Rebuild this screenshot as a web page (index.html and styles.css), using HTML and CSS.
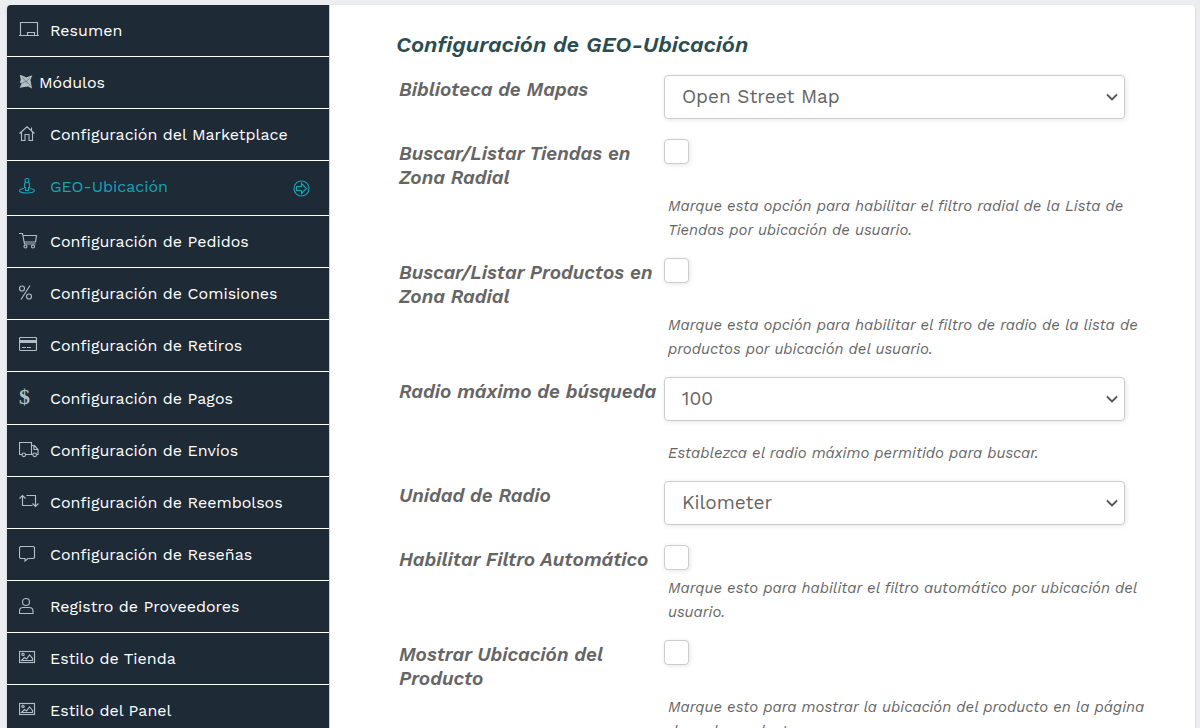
FILE: index.html
```
<!DOCTYPE html>
<html lang="es">
<head>
<meta charset="utf-8">
<title>Configuración de GEO-Ubicación</title>
<link rel="stylesheet" href="styles.css">
</head>
<body>
<div class="panel">
  <nav class="tabs">
    <a class="tab" href="#"><svg class="icon" viewBox="0 0 20 16"><path d="M1.500 13V.5h17V13M0 13.500h20M8.500 13v-2.500h7V13"/></svg><span>Resumen</span></a>
    <a class="tab tab-compact" href="#"><svg class="icon icon-small" viewBox="0 0 14 16"><path class="solid" d="M.8.8l4.700 1.700L7 3.500 13.300 1.200 11.500 6l1.500 8.500-4-2-8.500 1.300 2-3.800L.8 8l1-2z"/><path class="cut" d="M2 9.500l5-2 4-3.500M7 7.500l4.500 4M3.500 3.500L7 7.500"/></svg><span>Módulos</span></a>
    <a class="tab" href="#"><svg class="icon" viewBox="0 0 20 16"><path d="M.5 7.500L8 .8l7.500 6.700M2.500 6v8.500h3.500v-6h4v6h3.500V6M12.500 1.500v3"/></svg><span>Configuración del Marketplace</span></a>
    <a class="tab tab-active" href="#"><svg class="icon" viewBox="0 0 20 16"><circle cx="8" cy="2.500" r="2"/><path d="M6.500 4.500l-1 1v4h1v3h3v-3h1v-4l-1-1M5 10.500c-3 .4-4.500 1.100-4.500 2.100C.5 14 4 15 8 15s7.500-1 7.500-2.400c0-1-1.500-1.700-4.500-2.100"/></svg><span>GEO-Ubicación</span><svg class="arrow" viewBox="0 0 17 17"><circle cx="8.500" cy="8.500" r="7.500"/><path d="M3.500 6.500h5v-3l5 5-5 5v-3h-5z"/></svg></a>
    <a class="tab" href="#"><svg class="icon" viewBox="0 0 20 16"><path d="M0 .5h3.500L5.500 11h11M4 2.500h13.500l-1 6.500H5.300"/><circle cx="6.500" cy="13.500" r="1.500"/><circle cx="14" cy="13.500" r="1.500"/></svg><span>Configuración de Pedidos</span></a>
    <a class="tab" href="#"><svg class="icon" viewBox="0 0 20 16"><path d="M11 .5L2 14.500"/><circle cx="3" cy="3.500" r="2.500"/><circle cx="10" cy="11.500" r="2.500"/></svg><span>Configuración de Comisiones</span></a>
    <a class="tab" href="#"><svg class="icon" viewBox="0 0 20 16"><rect x=".5" y=".5" width="17" height="13" rx="1"/><path class="solid" d="M1 3h17v3H1z"/><path d="M3 10.500h4M8 10.500h4"/></svg><span>Configuración de Retiros</span></a>
    <a class="tab tab-money" href="#"><b class="icon dollar">$</b><span>Configuración de Pagos</span></a>
    <a class="tab" href="#"><svg class="icon" viewBox="0 0 20 16"><path d="M3 12.500H.5V.5h12v12H6.500M12.500 3.500h3l3.500 4v5h-1.500M14 12.500h-1.500M15 4v3.500h4"/><circle cx="4.800" cy="12.800" r="1.800"/><circle cx="15.700" cy="12.800" r="1.800"/></svg><span>Configuración de Envíos</span></a>
    <a class="tab" href="#"><svg class="icon" viewBox="0 0 20 16"><path d="M.5 4.500l3-3 3 3M3.500 1.500v10h10M7.500 1.500h9v11M13.500 9.500l3 3 3-3"/></svg><span>Configuración de Reembolsos</span></a>
    <a class="tab" href="#"><svg class="icon" viewBox="0 0 20 16"><path d="M1.500.5h13l1 1v10l-1 1H9l-3 2.500v-2.500H1.500l-1-1v-10z"/></svg><span>Configuración de Reseñas</span></a>
    <a class="tab" href="#"><svg class="icon" viewBox="0 0 20 16"><circle cx="7" cy="4" r="3.500"/><path d="M4 9.500h6c2.500 0 4 1.500 4 3.500v2.500H.5V13c0-2 1-3.500 3.500-3.500z"/></svg><span>Registro de Proveedores</span></a>
    <a class="tab" href="#"><svg class="icon" viewBox="0 0 20 16"><rect x=".5" y="1.500" width="15" height="11"/><circle cx="4" cy="4.500" r="1.200"/><path d="M2.500 10.500l3-3 2 1.500 3-4 3 3.500v2z"/></svg><span>Estilo de Tienda</span></a>
    <a class="tab" href="#"><svg class="icon" viewBox="0 0 20 16"><rect x=".5" y="1.500" width="15" height="11"/><circle cx="4" cy="4.500" r="1.200"/><path d="M2.500 10.500l3-3 2 1.500 3-4 3 3.500v2z"/></svg><span>Estilo del Panel</span></a>
  </nav>
  <main class="content">
    <h2 class="title">Configuración de GEO-Ubicación</h2>
    <form class="form">
      <div class="row">
        <label class="label" for="lib">Biblioteca de Mapas</label>
        <select class="select" id="lib"><option>Open Street Map</option></select>
      </div>
      <div class="row">
        <label class="label" for="stores">Buscar/Listar Tiendas en Zona Radial</label>
        <input class="check" type="checkbox" id="stores">
        <p class="hint">Marque esta opción para habilitar el filtro radial de la Lista de Tiendas por ubicación de usuario.</p>
      </div>
      <div class="row">
        <label class="label" for="products">Buscar/Listar Productos en Zona Radial</label>
        <input class="check" type="checkbox" id="products">
        <p class="hint">Marque esta opción para habilitar el filtro de radio de la lista de productos por ubicación del usuario.</p>
      </div>
      <div class="row">
        <label class="label" for="radius">Radio máximo de búsqueda</label>
        <select class="select" id="radius"><option>100</option></select>
        <p class="hint">Establezca el radio máximo permitido para buscar.</p>
      </div>
      <div class="row">
        <label class="label" for="unit">Unidad de Radio</label>
        <select class="select" id="unit"><option>Kilometer</option></select>
      </div>
      <div class="row">
        <label class="label" for="auto">Habilitar Filtro Automático</label>
        <input class="check" type="checkbox" id="auto">
        <p class="hint">Marque esto para habilitar el filtro automático por ubicación del usuario.</p>
      </div>
      <div class="row">
        <label class="label" for="show">Mostrar Ubicación del Producto</label>
        <input class="check" type="checkbox" id="show">
        <p class="hint">Marque esto para mostrar la ubicación del producto en la página de cada producto.</p>
      </div>
    </form>
  </main>
</div>
</body>
</html>
```
FILE: styles.css
```
* {
  box-sizing: border-box;
}

body {
  margin: 0;
  height: 100vh;
  overflow: hidden;
  background: #ecedf1;
  color: #656565;
  font-family: "Work Sans", Inter, "Open Sans", sans-serif;
}

.panel {
  display: flex;
  margin: 5px 5px 0 7px;
  background: #fff;
  border-radius: 4px;
  box-shadow: 0 1px 2px rgba(0, 0, 0, 0.2);
  overflow: hidden;
}

.tabs {
  flex: none;
  width: 323px;
  background: #1e2a35;
  border-right: 1px solid #ccc;
}

.tab {
  display: flex;
  gap: 11px;
  padding: 14px 19px 14px 12px;
  border-bottom: 1px solid #fff;
  color: #fff;
  font-size: 16px;
  line-height: 23px;
  text-decoration: none;
}

.tab-compact {
  gap: 6px;
}

.tab-active {
  color: #17a2b8;
}

.icon {
  flex: none;
  width: 20px;
  height: 16px;
  margin-top: 3px;
  color: #b0bec5;
  fill: none;
  stroke: currentColor;
  stroke-width: 1.15;
}

.icon-small {
  width: 14px;
}

.solid {
  fill: currentColor;
  stroke: none;
}

.cut {
  stroke: #1e2a35;
  stroke-width: 0.4;
}

.tab-active .icon {
  color: #17a2b8;
}

.tab-money {
  padding-top: 15px;
}

.dollar {
  margin-top: 0;
  font: bold 22px/20px "Liberation Serif", serif;
}

.arrow {
  width: 17px;
  height: 17px;
  margin: 5px 0 4px auto;
  fill: none;
  stroke: currentColor;
  stroke-width: 1.15;
}

.content {
  flex: 1;
  padding: 26px 46px 0 66px;
}

.title {
  margin: 0;
  color: #2b4c50;
  font-size: 22px;
  font-style: italic;
  font-weight: 600;
  line-height: 28px;
}

.form {
  padding: 16px 0 0 3px;
}

.row {
  display: grid;
  grid-template-columns: 265px 1fr;
  align-items: start;
}

.label {
  padding: 3px 0 4px;
  font-size: 19px;
  font-style: italic;
  font-weight: 600;
  line-height: 24px;
}

.select {
  appearance: none;
  width: 95%;
  height: 44px;
  margin: 0 0 20px;
  padding: 0 24px 1px 17px;
  border: 1px solid #ccc;
  border-radius: 4px;
  background: #fff url("data:image/svg+xml,%3Csvg xmlns='http://www.w3.org/2000/svg' width='12' height='8'%3E%3Cpath d='M1 1.500L6 6.500l5-5' fill='none' stroke='%23555' stroke-width='1.800'/%3E%3C/svg%3E") no-repeat right 6px center;
  box-shadow: 1px 1px 5px rgba(0, 0, 0, 0.1);
  color: #656565;
  font: 19px "Work Sans", Inter, "Open Sans", sans-serif;
}

.check {
  appearance: none;
  width: 25px;
  height: 25px;
  margin: 0;
  border: 1px solid #ccc;
  border-radius: 4px;
  background: #fff;
  box-shadow: 1px 1px 5px rgba(0, 0, 0, 0.1);
}

.hint {
  grid-column: 2;
  margin: 0 0 16px 4px;
  font-size: 15px;
  font-style: italic;
  line-height: 24px;
}
```
